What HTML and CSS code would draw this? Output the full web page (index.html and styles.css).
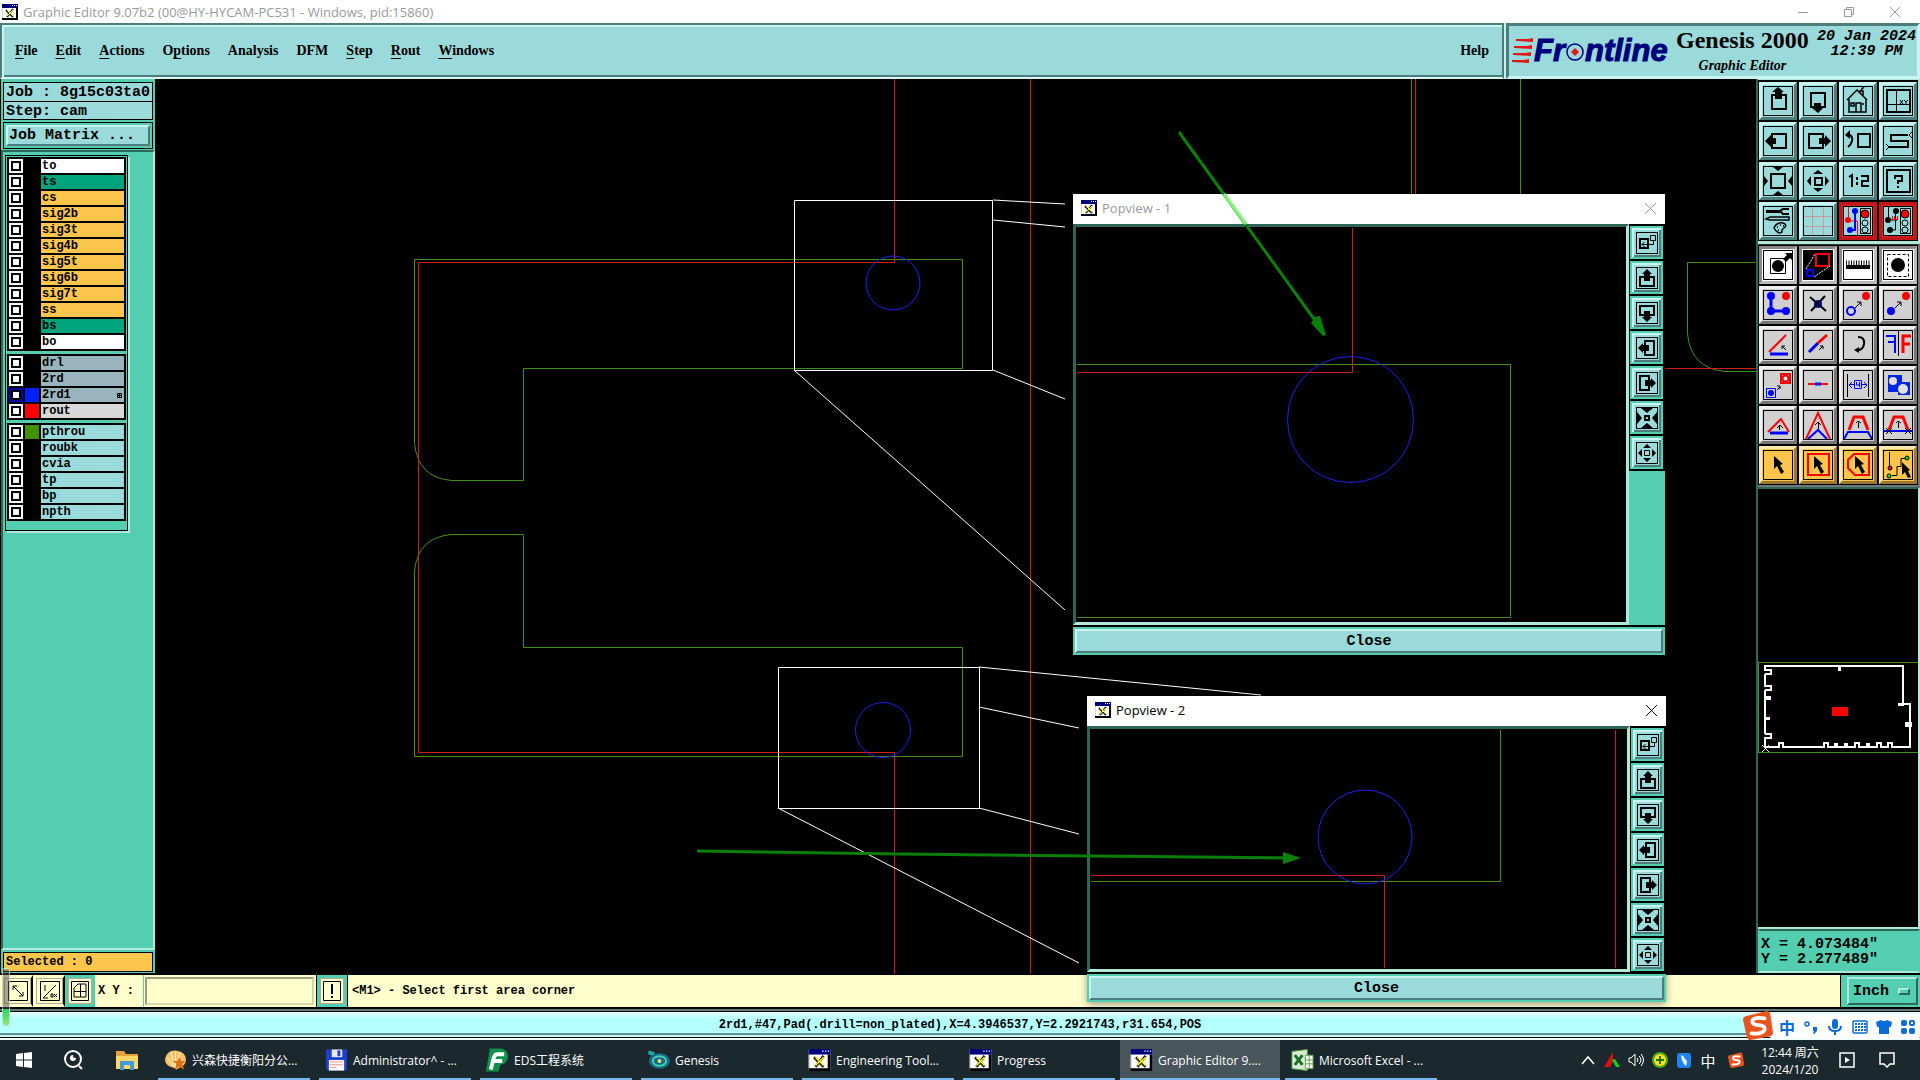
FILE: index.html
```html
<!DOCTYPE html>
<html lang="en">
<head>
    <meta charset="utf-8">
    <title>Graphic Editor 9.07b2</title>
    <link rel="stylesheet" href="styles.css">
</head>
<body>
    <!-- icon set -->
    <svg class="defs" width="0" height="0" aria-hidden="true">
        <symbol id="xwin" viewBox="0 0 16 16"><path fill="#d8d8d8" d="M0 0h16v16H0z"/><path fill="#fff" d="M1 4h13v10H1z"/><path fill="#00007c" d="M0 0h16v4H0z"/><path fill="#fff" d="M10 1h1v1h-1zM12 1h1v1h-1zM14 1h1v1h-1z"/><path d="M14 4h2v12H0v-2h14z"/><path stroke="#222" stroke-width="2" d="M4 6l7 7M11 5l-6 8"/><path stroke="#ff0" stroke-width="1" d="M5 6l6 6M11 6l-6 6"/></symbol>
        <symbol id="up" viewBox="1 1 28 28"><path fill="none" stroke="#000" stroke-width="2" d="M9 9h14v14H9z"/><path d="M15 1l6 5h-2v7h-7V6h-3z"/></symbol>
        <symbol id="down" viewBox="1 1 28 28"><path fill="none" stroke="#000" stroke-width="2" d="M8 7h14v14H8z"/><path d="M15 27l5-5h-2v-5h-7v5H9z"/></symbol>
        <symbol id="left" viewBox="1 1 28 28"><path fill="none" stroke="#000" stroke-width="2" d="M9 8h14v14H9z"/><path d="M2 15l6-6v3h5v6H8v3z"/></symbol>
        <symbol id="right" viewBox="1 1 28 28"><path fill="none" stroke="#000" stroke-width="2" d="M6 8h14v14H6z"/><path d="M28 15l-6-6v3h-6v6h6v3z"/></symbol>
        <symbol id="home" viewBox="1 1 28 28"><path fill="none" stroke="#000" stroke-width="1.500" d="M4 14l10-10 10 10M6 13v13h17V13M13 26v-9h5v9M8 17h3v3H8zM19 18h2M17 7V5h3v5M18 4l3-3"/></symbol>
        <symbol id="grid4" viewBox="1 1 28 28"><path fill="none" stroke="#000" stroke-width="2" d="M4 4h23v22H4z"/><path fill="none" stroke="#000" d="M13.500 4v22M4 18.500h23M17 14l3 4M20 14l-3 4M21 14l2 2 2-2M23 16v3"/></symbol>
        <symbol id="undo" viewBox="1 1 28 28"><path fill="none" stroke="#000" stroke-width="2" d="M15 8h12v13H15zM5 9h2q3 2 2 6-1 4-4 6"/><path d="M2 9l5-5v9z"/></symbol>
        <symbol id="snake" viewBox="1 1 28 28"><path fill="none" stroke="#000" stroke-width="2" d="M25 9H8v6h17v6H6"/><path fill="none" stroke="#000" d="M29 6l-3 3 3 3M3 18l3 3-3 3"/></symbol>
        <symbol id="zin" viewBox="1 1 28 28"><path fill="none" stroke="#000" stroke-width="2" d="M8 8h14v14H8z"/><path d="M10 1h10l-5 4zM10 29h10l-5-4zM1 10v10l4-5zM29 10v10l-4-5z"/></symbol>
        <symbol id="zout" viewBox="1 1 28 28"><path fill="none" stroke="#000" stroke-width="2" d="M12 12h7v7h-7z"/><path d="M10 8h10l-5-4zM10 22h10l-5 4zM8 10v10l-4-5zM22 10v10l4-5z"/></symbol>
        <symbol id="ratio" viewBox="1 1 28 28"><path fill="none" stroke="#000" stroke-width="2" d="M6 11l3-2v12M14 11v3M14 16v3M18 10h7v5h-6v5h7"/></symbol>
        <symbol id="query" viewBox="1 1 28 28"><path fill="none" stroke="#000" stroke-width="2" d="M4 4h23v22H4zM12 13v-3h7v5h-4v3M15 20v2"/></symbol>
        <symbol id="tools" viewBox="1 1 28 28"><path d="M3 4h14v3H3z"/><path fill="none" stroke="#000" stroke-width="2" d="M26 3h-6l-3 2 3 3h6"/><path fill="none" stroke="#000" stroke-width="1.500" d="M3 13l4-2h19v3H7zM11 22q2-6 9-5 5 2 1 5-3 2-2 4-4 3-8-4M14 21h1M17 19h1M20 20h1M15 24h1"/></symbol>
        <symbol id="mesh" viewBox="1 1 28 28"><path fill="none" stroke="#c99a9a" d="M9.500 0v30M20.500 0v30M0 10.500h30M0 20.500h30"/></symbol>
        <symbol id="light1" viewBox="1 1 28 28"><path fill="none" stroke="#000" d="M17.500 2.500h10v25h-10z"/><path fill="none" stroke="red" d="M5.500 1v14h9v14"/><circle cx="5" cy="14" r="3" fill="red"/><path fill="none" stroke="#00f" stroke-width="2" d="M12 5v19H8"/><circle cx="12" cy="5" r="3" fill="#00f"/><circle cx="7" cy="24" r="3" fill="#00f"/><circle cx="22" cy="8" r="4" fill="red" stroke="#000"/><circle cx="22" cy="17" r="3" fill="none" stroke="#000"/><circle cx="22" cy="24" r="3" fill="none" stroke="#000"/></symbol>
        <symbol id="light2" viewBox="1 1 28 28"><path fill="none" stroke="#000" d="M17.500 2.500h10v25h-10zM5.500 1v13h9M12.500 5v19H8"/><path fill="none" stroke="red" d="M8 13.500h7M9.500 10v3M11.500 10v3M14.500 10v3"/><circle cx="5" cy="14" r="3"/><circle cx="13" cy="5" r="3"/><circle cx="7" cy="24" r="3"/><circle cx="22" cy="8" r="4" fill="red" stroke="#000"/><circle cx="22" cy="17" r="3" fill="none" stroke="#000"/><circle cx="22" cy="24" r="3" fill="none" stroke="#000"/></symbol>
        <symbol id="movepad" viewBox="1 1 28 28"><path fill="none" stroke="#000" d="M7.500 8.500h15v15h-15z"/><circle cx="15" cy="16" r="6"/><path d="M20 9l4-4-2-2h7v7l-2-2-4 4z"/></symbol>
        <symbol id="popzoom" viewBox="1 1 28 28"><path d="M1 1h28v28H1z"/><path fill="none" stroke="red" stroke-width="2" d="M13 4h13v12H13z"/><path fill="none" stroke="#00f" stroke-width="2" d="M4 20h6v6H4z"/><path stroke="#fff" stroke-dasharray="2 1" d="M3 19L12 4M11 27l16-11"/></symbol>
        <symbol id="ruler" viewBox="1 1 28 28"><path d="M3 15h24v4H3z"/><path stroke="#000" stroke-dasharray="1 1.500" stroke-width="5" d="M3 13h25"/></symbol>
        <symbol id="dashpad" viewBox="1 1 28 28"><path fill="none" stroke="#000" stroke-dasharray="3 2" d="M4.500 4.500h21v22h-21z"/><circle cx="15" cy="15" r="7"/></symbol>
        <symbol id="chain" viewBox="0 0 28 28"><path fill="none" stroke="#00f" stroke-width="3" d="M7 5v15h14"/><circle cx="7" cy="5" r="4" fill="#00f"/><circle cx="7" cy="20" r="4" fill="#00f"/><circle cx="22" cy="20" r="4" fill="#00f"/><circle cx="22" cy="5" r="4" fill="red"/></symbol>
        <symbol id="delpad" viewBox="0 0 28 28"><circle cx="14" cy="13" r="4" fill="#00c"/><path stroke="#000" stroke-width="2" d="M6 6l16 14M21 5L7 20"/></symbol>
        <symbol id="copypad" viewBox="0 0 28 28"><circle cx="22" cy="5" r="4" fill="red"/><circle cx="7" cy="20" r="4" fill="none" stroke="#00f" stroke-width="2"/><path fill="none" stroke="#000" d="M11 17l6-6M13 11h4v4"/></symbol>
        <symbol id="movepad2" viewBox="0 0 28 28"><circle cx="22" cy="5" r="4" fill="red"/><circle cx="7" cy="20" r="4" fill="#00f"/><path fill="none" stroke="#000" d="M11 17l6-6M13 11h4v4"/></symbol>
        <symbol id="angle" viewBox="0 0 28 28"><path stroke="red" stroke-width="2" d="M5 21L22 4"/><path stroke="#00f" stroke-width="3" d="M6 23h18"/><path fill="none" stroke="#000" d="M22 19l-4-4M18 18v-3h3"/></symbol>
        <symbol id="diag" viewBox="0 0 28 28"><path stroke="#00f" stroke-width="3" d="M5 21l9-9"/><path stroke="red" stroke-width="3" d="M14 12l9-8"/><path fill="none" stroke="#000" d="M15 19l4-4M16 15h3v3"/></symbol>
        <symbol id="rotate" viewBox="0 0 28 28"><path fill="none" stroke="#000" stroke-width="2" d="M14 6q7 0 6 7-1 6-6 6"/><path d="M10 19l5-3v6z"/></symbol>
        <symbol id="mirror" viewBox="0 0 28 28"><path stroke="#000" d="M14.500 0v25"/><path fill="none" stroke="#00f" stroke-width="2" d="M2 5h9v17M4 11h6"/><path fill="none" stroke="red" stroke-width="3" d="M27 5h-8v17M19 13h7"/></symbol>
        <symbol id="swap" viewBox="0 0 28 28"><path fill="#fff" stroke="red" stroke-width="2" d="M17 3h9v9h-9z"/><circle cx="21.500" cy="7.500" r="3" fill="#fff" stroke="red" stroke-width="2"/><path fill="none" stroke="#00f" d="M2.500 17.500h9v9h-9z"/><circle cx="7" cy="22" r="3" fill="#00f"/><path fill="none" stroke="#000" d="M13 19l3-3M13 15h3v3"/></symbol>
        <symbol id="breakline" viewBox="0 0 28 28"><path stroke="red" stroke-width="2" d="M4 13h20"/><path stroke="#00f" stroke-width="3" d="M11 13h6"/></symbol>
        <symbol id="width" viewBox="0 0 28 28"><path stroke="#000" d="M3.500 3v23M24.500 3v23"/><path fill="none" stroke="#00f" d="M5 13.500h5M23 13.500h-5M8 11l-3 3 3 3M20 11l3 3-3 3M10.500 9.500h7v8h-7zM12.500 11v3h3M15.500 11v5"/></symbol>
        <symbol id="merge" viewBox="0 0 28 28"><path fill="#0026e8" d="M4 4h14v7h8v13H14v-3H4z"/><circle cx="9" cy="10" r="4" fill="#e0e0e0"/><circle cx="19" cy="18" r="5" fill="#e0e0e0"/></symbol>
        <symbol id="tri1" viewBox="0 0 28 28"><path fill="none" stroke="red" stroke-width="2" d="M4 21L17 8l8 13"/><path stroke="#00f" stroke-width="3" d="M6 22h18"/><path fill="none" stroke="#000" d="M15.500 19v-5M13 17l3-3 3 3"/></symbol>
        <symbol id="tri2" viewBox="0 0 28 28"><path fill="none" stroke="red" stroke-width="2" d="M2 28L14 2l12 26"/><path fill="none" stroke="#00f" stroke-width="2" d="M4 28l10-9 9 9"/><path fill="none" stroke="#000" d="M14.500 18v-6M11 14l3-3 3 3"/></symbol>
        <symbol id="trap1" viewBox="0 0 28 28"><path fill="none" stroke="#00f" stroke-width="2" d="M0 28l4-7h20l4 7"/><path fill="none" stroke="red" stroke-width="3" d="M5 19l5-13h9l5 13"/><path fill="none" stroke="#000" d="M14.500 17v-7M12 12l2-2 3 2"/></symbol>
        <symbol id="trap2" viewBox="0 0 28 28"><path fill="none" stroke="red" stroke-width="3" d="M5 19l5-13h9l5 13"/><path stroke="#00f" stroke-width="2" d="M0 20h28"/><path fill="none" stroke="#000" d="M14.500 17v-7M12 12l2-2 3 2M2 17l6 6M8 17l-6 6M21 17l6 6M27 17l-6 6"/></symbol>
        <symbol id="ptr" viewBox="0 0 28 28"><path d="M10 5l9 8-3 1 4 7-3 2-4-8-3 3z"/></symbol>
        <symbol id="ptrbox" viewBox="0 0 28 28"><path fill="none" stroke="red" stroke-width="2" d="M4 3h21v21H4z"/><path d="M10 5l9 8-3 1 4 7-3 2-4-8-3 3z"/></symbol>
        <symbol id="ptrpoly" viewBox="0 0 28 28"><path fill="none" stroke="red" stroke-width="2" d="M10 3h15v21H11l-7-7V9z"/><path d="M11 5l9 8-3 1 4 7-3 2-4-8-3 3z"/></symbol>
        <symbol id="ptrnet" viewBox="0 0 28 28"><path fill="none" stroke="#000" d="M5.500 1v16M8 24.500h5v-9h4v-8h5"/><circle cx="6" cy="17" r="2" fill="red" stroke="#000"/><circle cx="5" cy="25" r="2" fill="#0e0" stroke="#000"/><circle cx="23" cy="7" r="2" fill="#0e0" stroke="#000"/><path d="M18 11l8 8-2 1 3 6-3 1-3-6-3 3z"/></symbol>
        <!-- small versions for the popview windows -->
        <symbol id="popout" viewBox="0 0 20 20"><path fill="none" stroke="#000" stroke-width="2" d="M3 6h8v9H3z"/><path fill="none" stroke="#000" d="M13.500 2.500h5v5h-5zM16.500 8v3.500H5M7.500 9L5 11.500 7.500 14"/></symbol>
        <symbol id="pup" viewBox="0 0 20 20"><path fill="none" stroke="#000" stroke-width="2" d="M3 9h14v9H3z"/><path d="M10 1l5 5h-2v7H7V6H5z"/></symbol>
        <symbol id="pdown" viewBox="0 0 20 20"><path fill="none" stroke="#000" stroke-width="2" d="M3 3h14v9H3z"/><path d="M10 19l5-5h-2V8H7v6H5z"/></symbol>
        <symbol id="pleft" viewBox="0 0 20 20"><path fill="none" stroke="#000" stroke-width="2" d="M8 3h9v14H8z"/><path d="M1 10l5-5v2h6v6H6v2z"/></symbol>
        <symbol id="pright" viewBox="0 0 20 20"><path fill="none" stroke="#000" stroke-width="2" d="M3 3h9v14H3z"/><path d="M19 10l-5-5v2H8v6h6v2z"/></symbol>
        <symbol id="pzin" viewBox="0 0 20 20"><path fill="none" stroke="#000" stroke-width="2" d="M8 8h4v4H8z"/><path d="M4 0h12l-6 5zM4 20h12l-6-5zM0 4v12l5-6zM20 4v12l-5-6z"/></symbol>
        <symbol id="pzout" viewBox="0 0 20 20"><path fill="none" stroke="#000" d="M7.500 7.500h5v5h-5z"/><path d="M6 5h8l-4-4zM6 15h8l-4 4zM5 6v8l-4-4zM15 6v8l4-4z"/></symbol>
        <symbol id="sogou" viewBox="0 0 32 32"><path fill="#e8541e" d="M2 7L25 1q3 0 4 3l3 20q0 3-3 4L8 32q-3 0-4-3L0 10q0-2 2-3z"/><path fill="none" stroke="#fff" stroke-width="4" stroke-linecap="round" d="M23 9Q9 7 10 13q1 3 6 3 8 0 7 5-2 5-14 4"/></symbol>
    </svg>

    <header class="titlebar">
        <svg class="ico16"><use href="#xwin"/></svg>
        <span class="titlebar-text">Graphic Editor 9.07b2 (00@HY-HYCAM-PC531 - Windows, pid:15860)</span>
        <div class="winbuttons">
            <button aria-label="Minimize"><svg width="10" height="10"><path d="M0 5.500h10"/></svg></button>
            <button aria-label="Restore"><svg width="10" height="10"><path d="M.5 2.500h7v7h-7zM2.500 2V.5h7v7H8"/></svg></button>
            <button aria-label="Close window"><svg width="10" height="10"><path d="M0 0l10 10M10 0L0 10"/></svg></button>
        </div>
    </header>

    <div class="topbar">
        <nav class="menubar">
            <button><u>F</u>ile</button>
            <button><u>E</u>dit</button>
            <button><u>A</u>ctions</button>
            <button>O<u>p</u>tions</button>
            <button>Analysis</button>
            <button>DFM</button>
            <button><u>S</u>tep</button>
            <button><u>R</u>out</button>
            <button><u>W</u>indows</button>
            <button class="menu-help">Help</button>
        </nav>
        <div class="brand">
            <div class="logo">
                <svg width="22" height="26"><path fill="#e01818" d="M6 3l15-3v4zM3 10l17-3v4zM2 17l17-3v4zM0 24l17-3v4z"/><path stroke="#e01818" stroke-width="2" d="M4 2h16M2 9h18M1 16h17M0 23h17"/></svg>
                <span>Fr</span>
                <svg width="20" height="22"><circle cx="10" cy="12" r="8" fill="none" stroke="#00007c" stroke-width="1.500"/><path fill="#e01818" d="M10 8l4 4-4 4-4-4z"/></svg>
                <span>ntline</span>
            </div>
            <div class="product">
                <div class="product-name">Genesis 2000</div>
                <div class="product-sub">Graphic Editor</div>
            </div>
            <div class="date">20 Jan 2024<br>12:39 PM</div>
        </div>
    </div>

    <main class="work">
        <aside class="side">
            <div class="job">
                <div class="job-line">Job : 8g15c03ta0</div>
                <div class="job-line">Step: cam</div>
            </div>
            <div class="matrix"><button class="matrix-btn">Job Matrix ...</button></div>
            <div class="side-body">
                <div class="layers">
                    <div class="group">
                        <label class="layer"><input type="checkbox"><i></i><span class="white">to</span></label>
                        <label class="layer"><input type="checkbox"><i></i><span class="mask">ts</span></label>
                        <label class="layer"><input type="checkbox"><i></i><span class="sig">cs</span></label>
                        <label class="layer"><input type="checkbox"><i></i><span class="sig">sig2b</span></label>
                        <label class="layer"><input type="checkbox"><i></i><span class="sig">sig3t</span></label>
                        <label class="layer"><input type="checkbox"><i></i><span class="sig">sig4b</span></label>
                        <label class="layer"><input type="checkbox"><i></i><span class="sig">sig5t</span></label>
                        <label class="layer"><input type="checkbox"><i></i><span class="sig">sig6b</span></label>
                        <label class="layer"><input type="checkbox"><i></i><span class="sig">sig7t</span></label>
                        <label class="layer"><input type="checkbox"><i></i><span class="sig">ss</span></label>
                        <label class="layer"><input type="checkbox"><i></i><span class="mask">bs</span></label>
                        <label class="layer"><input type="checkbox"><i></i><span class="white">bo</span></label>
                    </div>
                    <div class="group">
                        <label class="layer"><input type="checkbox"><i></i><span class="drill">drl</span></label>
                        <label class="layer"><input type="checkbox"><i></i><span class="drill">2rd</span></label>
                        <label class="layer work-layer"><input type="checkbox"><i class="blue"></i><span class="drill">2rd1<svg width="5" height="5"><path fill="none" stroke="#000" d="M.5 .5h4v4h-4zM2.500 0v5M0 2.500h5"/></svg></span></label>
                        <label class="layer"><input type="checkbox"><i class="red"></i><span class="routing">rout</span></label>
                    </div>
                    <div class="group">
                        <label class="layer"><input type="checkbox"><i class="green"></i><span>pthrou</span></label>
                        <label class="layer"><input type="checkbox"><i></i><span>roubk</span></label>
                        <label class="layer"><input type="checkbox"><i></i><span>cvia</span></label>
                        <label class="layer"><input type="checkbox"><i></i><span>tp</span></label>
                        <label class="layer"><input type="checkbox"><i></i><span>bp</span></label>
                        <label class="layer"><input type="checkbox"><i></i><span>npth</span></label>
                    </div>
                </div>
            </div>
            <div class="selected">Selected : 0</div>
        </aside>

        <svg class="canvas">
            <g transform="translate(-155 -79)" fill="none">
                <g class="c-green">
                    <path d="M962.500 259.500H414.500V443.500Q418 478 452 480.500H523.500V368.500H962.500z"/>
                    <path d="M523.500 534.500H452Q418 537 414.500 571V756.500H962.500V647.500H523.500z"/>
                    <path d="M1411.500 79V200M1520.500 79V200M1760 262.500H1687.500V333Q1690 368 1725 371.500H1760"/>
                </g>
                <g class="c-red">
                    <path d="M894.500 79V262.500H418.500V752.500H894.500V974M1030.500 79V974M1415.500 79V200M1660 368.500H1760"/>
                </g>
                <g class="c-blue"><circle cx="893" cy="283" r="27"/><circle cx="883" cy="730" r="27.500"/></g>
                <g class="c-white">
                    <path d="M794.500 200.500H992.500V370.500H794.500zM778.500 667.500H979.500V808.500H778.500z"/>
                    <path d="M993 200L1065 204M993 220L1065 227M993 370L1065 399M794 370L1065 610M979 667L1261 695M979 707L1079 728M979 808L1079 834M778 808L1079 963"/>
                </g>
            </g>
        </svg>

        <aside class="tools">
            <div class="toolgrid">
                <button aria-label="Pan up"><svg><use href="#up"/></svg></button>
                <button aria-label="Pan down"><svg><use href="#down"/></svg></button>
                <button aria-label="Home"><svg><use href="#home"/></svg></button>
                <button aria-label="XY window"><svg><use href="#grid4"/></svg></button>
                <button aria-label="Pan left"><svg><use href="#left"/></svg></button>
                <button aria-label="Pan right"><svg><use href="#right"/></svg></button>
                <button aria-label="Previous view"><svg><use href="#undo"/></svg></button>
                <button aria-label="Serpentine"><svg><use href="#snake"/></svg></button>
                <button aria-label="Zoom in"><svg><use href="#zin"/></svg></button>
                <button aria-label="Zoom out"><svg><use href="#zout"/></svg></button>
                <button aria-label="Scale"><svg><use href="#ratio"/></svg></button>
                <button aria-label="Query"><svg><use href="#query"/></svg></button>
                <button aria-label="Options"><svg><use href="#tools"/></svg></button>
                <button aria-label="Grid"><svg><use href="#mesh"/></svg></button>
                <button class="stop" aria-label="Net check"><svg><use href="#light1"/></svg></button>
                <button class="stop" aria-label="Short check"><svg><use href="#light2"/></svg></button>
            </div>
            <div class="toolgrid edit">
                <button class="on" aria-label="Move"><svg><use href="#movepad"/></svg></button>
                <button class="on" aria-label="Popview"><svg><use href="#popzoom"/></svg></button>
                <button class="on" aria-label="Measure"><svg><use href="#ruler"/></svg></button>
                <button class="on" aria-label="Select pad"><svg><use href="#dashpad"/></svg></button>
                <button aria-label="Add chain"><svg><use href="#chain"/></svg></button>
                <button aria-label="Delete"><svg><use href="#delpad"/></svg></button>
                <button aria-label="Copy"><svg><use href="#copypad"/></svg></button>
                <button aria-label="Move pad"><svg><use href="#movepad2"/></svg></button>
                <button aria-label="Angle"><svg><use href="#angle"/></svg></button>
                <button aria-label="Stretch"><svg><use href="#diag"/></svg></button>
                <button aria-label="Rotate"><svg><use href="#rotate"/></svg></button>
                <button aria-label="Mirror"><svg><use href="#mirror"/></svg></button>
                <button aria-label="Substitute"><svg><use href="#swap"/></svg></button>
                <button aria-label="Break"><svg><use href="#breakline"/></svg></button>
                <button aria-label="Width"><svg><use href="#width"/></svg></button>
                <button aria-label="Merge"><svg><use href="#merge"/></svg></button>
                <button aria-label="Move segment"><svg><use href="#tri1"/></svg></button>
                <button aria-label="Move corner"><svg><use href="#tri2"/></svg></button>
                <button aria-label="Move triplet"><svg><use href="#trap1"/></svg></button>
                <button aria-label="Trim triplet"><svg><use href="#trap2"/></svg></button>
                <button class="sel" aria-label="Select"><svg><use href="#ptr"/></svg></button>
                <button class="sel" aria-label="Select in box"><svg><use href="#ptrbox"/></svg></button>
                <button class="sel" aria-label="Select in polygon"><svg><use href="#ptrpoly"/></svg></button>
                <button class="sel" aria-label="Select net"><svg><use href="#ptrnet"/></svg></button>
            </div>
            <div class="overview">
                <svg viewBox="0 0 160 92" fill="none">
                    <path stroke="#459014" d="M0 .5h160M0 90.500h160M.5 0v90"/>
                    <path stroke="#fff" stroke-width="2" d="M7 4h138v38h7v43H7z"/>
                    <path stroke="#000" stroke-width="3" d="M7 9v3M7 25v3M7 72v3M21 85h4M66 85h4M97 85h4M119 85h4M130 85h4"/>
                    <path stroke="#fff" stroke-width="2" d="M7 8h6v4H7M7 24h6v4H7M7 72h6v4H7M21 86v-5h4v5M66 86v-5h4v5M97 86v-5h4v5M119 86v-5h4v5M130 86v-5h4v5"/>
                    <path fill="#fff" d="M80 4h3v5h-3zM6 34h7v4H6zM7 55h5v3H7zM76 81h4v5h-4zM86 81h4v5h-4zM108 81h4v5h-4zM147 60h7v5h-7zM140 41h6v3h-6z"/>
                    <path fill="red" d="M74 45h16v9H74z"/>
                    <path stroke="#fff" d="M4 83l7 7M11 83l-7 7"/>
                </svg>
            </div>
            <div class="coords">X = 4.073484"<br>Y = 2.277489"</div>
        </aside>
    </main>

    <footer class="cmdline">
        <button class="cmd-btn flat" aria-label="Snap line"><svg width="20" height="20"><path d="M.5 .5h19v19H.5zM5 5l10 10M5 9V5h4M15 11v4h-4"/></svg></button>
        <button class="cmd-btn flat" aria-label="Absolute or relative"><svg width="20" height="20"><path d="M.5 .5h19v19H.5zM3 17L16 4M5 4v6M3 17h5M11 13h2v3h-2zM14 13l3 3M17 13l-3 3"/></svg></button>
        <button class="cmd-btn" aria-label="Snap grid"><svg width="18" height="20"><path d="M.5 .5h17v19H.5zM7 3h8v13H3V7zM9.500 3v13M3 10.500h12"/></svg></button>
        <label class="xy-label" for="xy">X Y :</label>
        <div class="xy-box"><input id="xy" type="text"></div>
        <button class="cmd-btn" aria-label="Message"><svg width="18" height="20"><path d="M.5 .5h17v19H.5z"/><path stroke-width="2" d="M9 3v10M9 15v2"/></svg></button>
        <div class="message">&lt;M1&gt; - Select first area corner</div>
        <div class="unit">
            <div class="unit-box">
                <select aria-label="Unit"><option>Inch</option><option>MM</option></select>
                <i></i>
            </div>
        </div>
    </footer>
    <div class="status">2rd1,#47,Pad(.drill=non_plated),X=4.3946537,Y=2.2921743,r31.654,POS</div>

    <div class="taskbar">
        <button class="sys" aria-label="Start"><svg width="16" height="16"><path fill="#fff" d="M0 2l7-1v6.500H0zM8 1l8-1v7.500H8zM0 8.500h7V15l-7-1zM8 8.500h8V16l-8-1z"/></svg></button>
        <button class="sys search" aria-label="Search"><svg width="22" height="22"><circle cx="10" cy="10" r="8" fill="none" stroke="#fff" stroke-width="2"/><circle cx="10" cy="9" r="3" fill="#fff"/><circle cx="12" cy="7" r="2" fill="#1b282d"/><path stroke="#fff" stroke-width="2" d="M16 17l3 3"/></svg></button>
        <button class="sys folder" aria-label="Files"><svg width="22" height="20"><path fill="#e8a33d" d="M0 1h8l2 3h12v15H0z"/><path fill="#ffd767" d="M0 6h22v13H0z"/><path fill="#3f9bd8" d="M4 11h14v9h-4v-5H8v5H4z"/></svg></button>
        <div class="tasks">
            <button class="task"><svg width="24" height="24" viewBox="0 0 24 24"><path fill="#f6c36b" d="M12 2q11 1 11 10-1 7-7 8l-3 2-3-2Q2 19 1 12 2 2 12 2z"/><path stroke="#fff0c0" fill="none" d="M12 3v17M7 4l4 15M17 4l-4 15M3 9l7 10"/><path fill="#e07018" d="M16 9l2 4h5l-4 3 2 6-5-3-5 3 2-6-4-3h5z"/></svg><span>兴森快捷衡阳分公...</span></button>
            <button class="task"><svg width="24" height="24" viewBox="0 0 24 24"><path fill="#1c3fd0" d="M1 1h22v22H3l-2-2z"/><path fill="#e8e8f0" d="M7 1h11v8H7z"/><path fill="#1c3fd0" d="M13 2h3v6h-3z"/><path fill="#fff" d="M4 12h16v11H4z"/><path stroke="#e88" d="M5 14h14M5 17h14M5 20h7"/></svg><span>Administrator^ - ...</span></button>
            <button class="task"><svg width="24" height="24" viewBox="0 0 24 24"><path fill="#109048" d="M4 0h12q7 1 7 9-1 7-8 8l-2 7H0z"/><path fill="none" stroke="#fff" stroke-width="4" d="M19 6h-7q-3 0-4 4L5 22M8 13h9"/></svg><span>EDS工程系统</span></button>
            <button class="task"><svg width="24" height="24" viewBox="0 0 24 24"><path fill="#20a8a8" d="M2 2l6 2-1 4-6-2z"/><ellipse cx="13" cy="13" rx="11" ry="8" fill="#176a84"/><ellipse cx="13" cy="13" rx="7" ry="5" fill="none" stroke="#3fd0b0" stroke-width="2"/><circle cx="13" cy="13" r="2" fill="#e8e060"/></svg><span>Genesis</span></button>
            <button class="task"><svg width="22" height="22"><use href="#xwin"/></svg><span>Engineering Tool...</span></button>
            <button class="task"><svg width="22" height="22"><use href="#xwin"/></svg><span>Progress</span></button>
            <button class="task active"><svg width="22" height="22"><use href="#xwin"/></svg><span>Graphic Editor 9....</span></button>
            <button class="task"><svg width="24" height="24" viewBox="0 0 24 24"><path fill="#d8ecd0" stroke="#5c9c4c" d="M1 3l16-2v22L1 21z"/><path fill="#fff" stroke="#5c9c4c" d="M15 7h8v14h-8zM15 12h8M15 16h8M19 7v14"/><path stroke="#1c6c2c" stroke-width="3" d="M4 7l8 10M12 7L4 17"/></svg><span>Microsoft Excel - ...</span></button>
        </div>
        <div class="tray">
            <button aria-label="Show hidden icons"><svg width="14" height="10"><path fill="none" stroke="#fff" stroke-width="1.500" d="M1 9l6-7 6 7"/></svg></button>
            <button aria-label="Monitor"><svg width="16" height="16"><path fill="#e01010" d="M0 15L9 0v9l-3 6z"/><path fill="#10d020" d="M8 8l3-1 5 8h-4z"/></svg></button>
            <button aria-label="Volume"><svg width="16" height="14"><path fill="none" stroke="#fff" d="M1 5h2l4-4v12L3 9H1zM9 5q2 2 0 4M11 3q4 4 0 8M13 1q5 6 0 12"/></svg></button>
            <button aria-label="Guard"><svg width="16" height="16"><circle cx="8" cy="8" r="8" fill="#4ca81c"/><circle cx="8" cy="8" r="6" fill="#f8e020"/><path stroke="#187818" stroke-width="2" d="M8 4v8M4 8h8"/></svg></button>
            <button aria-label="Bird"><svg width="14" height="15"><rect width="14" height="15" rx="3" fill="#1c84f0"/><path fill="#fff" d="M4 2q3 1 4 4 2 1 2 3l-1 4q-4-3-5-11z"/></svg></button>
            <button class="ime" aria-label="Input mode">中</button>
            <button aria-label="Sogou"><svg width="16" height="16"><use href="#sogou"/></svg></button>
        </div>
        <div class="clock">12:44 周六<br>2024/1/20</div>
        <button class="sys" aria-label="Player"><svg width="16" height="16"><path fill="none" stroke="#fff" stroke-width="1.500" d="M1 1h14v14H1z"/><path fill="#fff" d="M6 5l5 3-5 3z"/></svg></button>
        <button class="sys notice" aria-label="Notifications"><svg width="16" height="17"><path fill="none" stroke="#fff" stroke-width="1.500" d="M1 1h14v11h-4l-3 3-3-3H1z"/></svg></button>
    </div>

    <section class="popview pop1">
        <div class="pop-title"><svg class="ico16"><use href="#xwin"/></svg><span>Popview - 1</span><button aria-label="Close Popview 1"><svg width="11" height="11"><path d="M0 0l11 11M11 0L0 11"/></svg></button></div>
        <div class="pop-body">
            <svg class="pop-canvas">
                <g transform="translate(-1076 -227)" fill="none">
                    <path class="c-green" d="M1077 364.500H1510.500V617.500H1077"/>
                    <path class="c-red" d="M1352.500 228V372.500H1077"/>
                    <circle class="c-blue" cx="1350.500" cy="419.500" r="63"/>
                </g>
            </svg>
            <div class="pop-tools">
                <button aria-label="Pop out"><svg><use href="#popout"/></svg></button>
                <button aria-label="Up"><svg><use href="#pup"/></svg></button>
                <button aria-label="Down"><svg><use href="#pdown"/></svg></button>
                <button aria-label="Left"><svg><use href="#pleft"/></svg></button>
                <button aria-label="Right"><svg><use href="#pright"/></svg></button>
                <button aria-label="Zoom in"><svg><use href="#pzin"/></svg></button>
                <button aria-label="Zoom out"><svg><use href="#pzout"/></svg></button>
            </div>
        </div>
        <div class="pop-foot"><button>Close</button></div>
    </section>

    <section class="popview pop2">
        <div class="pop-title"><svg class="ico16"><use href="#xwin"/></svg><span>Popview - 2</span><button aria-label="Close Popview 2"><svg width="11" height="11"><path d="M0 0l11 11M11 0L0 11"/></svg></button></div>
        <div class="pop-body">
            <svg class="pop-canvas">
                <g transform="translate(-1090 -729)" fill="none">
                    <path class="c-green" d="M1500.500 730V881.500H1091"/>
                    <path class="c-red" d="M1091 875.500H1384.500V968M1615.500 730V968"/>
                    <circle class="c-blue" cx="1365" cy="837" r="47"/>
                </g>
            </svg>
            <div class="pop-tools">
                <button aria-label="Pop out"><svg><use href="#popout"/></svg></button>
                <button aria-label="Up"><svg><use href="#pup"/></svg></button>
                <button aria-label="Down"><svg><use href="#pdown"/></svg></button>
                <button aria-label="Left"><svg><use href="#pleft"/></svg></button>
                <button aria-label="Right"><svg><use href="#pright"/></svg></button>
                <button aria-label="Zoom in"><svg><use href="#pzin"/></svg></button>
                <button aria-label="Zoom out"><svg><use href="#pzout"/></svg></button>
            </div>
        </div>
        <div class="pop-foot"><button>Close</button></div>
    </section>

    <!-- marker arrows drawn over the windows -->
    <svg class="marks">
        <g stroke="#0a800a" stroke-width="3" fill="none">
            <path d="M1179 132L1314 319M697 851L900 854L1286 858"/>
            <path stroke="#80f880" d="M1224 194L1246 224"/>
        </g>
        <path fill="#0a800a" d="M1311 323l4-6 5-1 6 19-3 1zM1283 852l18 6-18 6z"/>
    </svg>

    <div class="level"></div>

    <div class="imebar">
        <svg class="ime-logo" width="32" height="30"><use href="#sogou"/></svg>
        <span class="ime-mode">中</span>
        <svg width="16" height="16"><circle cx="4" cy="5" r="2" fill="none" stroke="#0a6cd6" stroke-width="1.500"/><path fill="#0a6cd6" d="M10 8h4v4l-3 3h-1l1-3h-1z"/></svg>
        <svg width="16" height="16"><rect x="5" y="0" width="6" height="10" rx="3" fill="#0a6cd6"/><path fill="none" stroke="#0a6cd6" stroke-width="2" d="M2 7q0 5 6 5t6-5M8 12v4"/></svg>
        <svg width="16" height="16"><rect x="1" y="2" width="14" height="12" rx="1" fill="none" stroke="#0a6cd6" stroke-width="1.500"/><path stroke="#0a6cd6" stroke-width="2" stroke-dasharray="2 1" d="M3 5h11M3 8h11M3 11h11"/></svg>
        <svg width="16" height="16"><path fill="#0a6cd6" d="M0 3l5-2q3 2 6 0l5 2-1 5h-2v7H3V8H1z"/></svg>
        <svg width="16" height="16"><rect x="1" y="1" width="6" height="6" rx="2" fill="#0a6cd6"/><rect x="10" y="2" width="4" height="4" rx="1" fill="none" stroke="#0a6cd6" stroke-width="2"/><rect x="1" y="9" width="6" height="6" rx="2" fill="#0a6cd6"/><rect x="9" y="9" width="6" height="6" rx="2" fill="#0a6cd6"/></svg>
    </div>
</body>
</html>
```
FILE: styles.css
```css
* {
    box-sizing: border-box;
}

body {
    margin: 0;
    height: 100vh;
    display: flex;
    flex-direction: column;
    position: relative;
    overflow: hidden;
    background: #000;
    color: #000;
    font-family: "Liberation Mono", monospace;
    font-size: 12px;
    font-weight: bold;
}

svg {
    display: block;
    flex: none;
}

.defs {
    position: absolute;
}

button {
    margin: 0;
    padding: 0;
    border: 0;
    background: none;
    color: inherit;
    font: inherit;
}

.ico16 {
    width: 16px;
    height: 16px;
}

/* window title */
.titlebar {
    flex: none;
    height: 23px;
    padding-left: 2px;
    display: flex;
    align-items: center;
    gap: 5px;
    background: #fff;
    color: #999;
    font: 13px "Open Sans", sans-serif;
}

.winbuttons {
    margin-left: auto;
    padding-right: 2px;
    display: flex;
}

.winbuttons button {
    width: 46px;
    display: flex;
    justify-content: center;
}

.winbuttons path {
    fill: none;
    stroke: #999;
}

/* menu and brand */
.topbar {
    flex: none;
    height: 56px;
    display: flex;
    background: #c6f0ee;
}

.menubar {
    flex: 1;
    display: flex;
    align-items: center;
    gap: 18px;
    padding: 0 13px;
    border: 2px solid;
    border-color: #4c7c7c #4c7c7c #d8f8f6 #4c7c7c;
    box-shadow: inset 2px 2px #c8f5f2, inset 0 -2px #4c7c7c;
    background: #9adada;
    font: bold 14px "Liberation Serif", serif;
}

.menubar u {
    text-underline-offset: 3px;
}

.menu-help {
    margin-left: auto;
}

.brand {
    flex: none;
    width: 414px;
    margin-left: 2px;
    padding: 0 1px 0 3px;
    display: flex;
    justify-content: space-between;
    border: 3px solid;
    border-color: #4c7c7c #c8f5f2 #c8f5f2 #4c7c7c;
    background: #9adada;
}

.logo {
    display: flex;
    align-items: center;
    color: #00007c;
    font: italic bold 31px "Liberation Sans", sans-serif;
    -webkit-text-stroke: 1px #00007c;
}

.product {
    font-family: "Liberation Serif", serif;
    text-align: center;
}

.product-name {
    font-size: 24px;
    line-height: 28px;
}

.product-sub {
    font-size: 14px;
    font-style: italic;
    line-height: 24px;
}

.date {
    padding-top: 3px;
    font-size: 15px;
    font-style: italic;
    line-height: 15px;
    text-align: center;
}

/* work area */
.work {
    flex: 1;
    min-height: 0;
    display: flex;
}

.canvas {
    flex: 1;
    min-width: 0;
    height: 100%;
}

.c-green { stroke: #459014; }
.c-red { stroke: #d01c1c; }
.c-blue { stroke: #1824f0; }
.c-white { stroke: #fff; }

/* left side */
.side {
    flex: none;
    width: 155px;
    margin-bottom: 2px;
    padding: 3px 2px 1px;
    display: flex;
    flex-direction: column;
    background: #54ceb0;
    border-left: 1px solid #000;
}

.job {
    border: 1px solid #000;
    background: #9adada;
    font-size: 15px;
}

.job-line {
    height: 18px;
    padding-left: 2px;
    line-height: 19px;
    white-space: nowrap;
}

.job-line + .job-line {
    border-top: 1px solid #000;
}

.matrix {
    margin-top: 2px;
    padding: 2px;
    border: 1px solid #000;
}

.matrix-btn {
    display: block;
    width: 100%;
    height: 21px;
    padding-left: 1px;
    border: 2px solid;
    border-color: #c8f5f2 #4c7c7c #4c7c7c #c8f5f2;
    background: #9adada;
    font-size: 15px;
    line-height: 17px;
    text-align: left;
}

.side-body {
    flex: 1;
    margin: 1px -2px 2px;
    padding: 3px 2px;
    border: 2px solid;
    border-color: #2f665a #b0e8da #b0e8da #2f665a;
}

.layers {
    width: 123px;
    height: 376px;
    padding: 1px;
    display: flex;
    flex-direction: column;
    gap: 3px;
    border: 1px solid #000;
    box-shadow: 2px 2px #b0e8da;
}

.group {
    padding: 2px;
    display: flex;
    flex-direction: column;
    gap: 2px;
    background: #000;
}

.layer {
    height: 14px;
    display: flex;
    gap: 2px;
}

.layer input {
    appearance: none;
    margin: 0;
    width: 14px;
    height: 14px;
    border: 2px solid #fff;
    background: #fff;
    box-shadow: inset 0 0 0 2px #000;
}

.work-layer input {
    border-color: #0000a8;
}

.layer i {
    width: 14px;
}

.layer .blue { background: #0020ff; }
.layer .red { background: #f00; }
.layer .green { background: #459000; }

.layer span {
    flex: 1;
    display: flex;
    align-items: center;
    justify-content: space-between;
    padding: 0 2px 0 1px;
    background: #9adada;
    line-height: 14px;
}

.layer .white { background: #fff; }
.layer .mask { background: #00a47c; }
.layer .sig { background: #fcc54c; }
.layer .drill { background: #9ab4be; }
.layer .routing { background: #d8d8d8; }

.selected {
    height: 20px;
    padding-left: 2px;
    border: 1px solid #000;
    background: #fcc54c;
    line-height: 18px;
}

/* right side tools */
.tools {
    flex: none;
    width: 164px;
    margin-bottom: 2px;
    display: flex;
    flex-direction: column;
    border-left: 2px solid #2f665a;
    background: #000;
}

.toolgrid {
    padding: 2px 0 1px 1px;
    display: grid;
    grid-template-columns: repeat(4, 38px);
    gap: 2px;
    border-top: 1px solid #b0e8da;
    border-right: 2px solid #b0e8da;
    border-bottom: 3px solid #b0e8da;
}

.toolgrid.edit {
    padding-top: 1px;
    border-top: 1px solid #333;
    border-right-color: #777;
    border-bottom: 2px solid #6e7876;
}

.toolgrid button {
    height: 38px;
    padding: 1px;
    border: 3px solid;
    border-color: #c8f5f2 #4c7c7c #4c7c7c #c8f5f2;
    background: #9adada;
}

.toolgrid button svg {
    width: 30px;
    height: 30px;
    border: 1px solid #000;
}

.toolgrid .stop {
    border-color: #c01818;
    box-shadow: inset 0 0 0 1px #e02020;
}

.toolgrid.edit button {
    border-color: #f0f0f0 #777 #777 #f0f0f0;
    background: #d0d0d0;
}

.toolgrid.edit .on {
    border-color: #888 #bbb #bbb #888;
    background: #fff;
}

.toolgrid.edit .sel {
    border-color: #ffe8b0 #9c7830 #9c7830 #ffe8b0;
    background: #fcc54c;
}

.overview {
    flex: 1;
    display: flex;
    align-items: center;
    border-top: 2px solid #2f665a;
    border-right: 2px solid #b0e8da;
    border-bottom: 2px solid #b0e8da;
}

.overview svg {
    width: 100%;
}

.coords {
    height: 44px;
    padding: 6px 1px;
    border: 2px solid;
    border-color: #2f665a #54ceb0 #b0e8da #54ceb0;
    background: #54ceb0;
    font-size: 15px;
    line-height: 15px;
}

/* command line */
.cmdline {
    flex: none;
    height: 32px;
    padding-left: 1px;
    display: flex;
    background: #ffffcc;
}

.cmd-btn {
    width: 30px;
    border: 3px solid #54ceb0;
    background: #ffffcc;
    box-shadow: inset 0 0 0 1px #b8a890;
    display: flex;
    align-items: center;
    justify-content: center;
}

.cmd-btn.flat {
    width: 32px;
    border-color: #ffffcc;
    border-right: 2px solid #000;
}

.cmd-btn path {
    fill: none;
    stroke: #000;
}

.xy-label {
    width: 49px;
    padding-left: 3px;
    border-right: 1px solid #54ceb0;
    line-height: 33px;
    white-space: nowrap;
}

.xy-box {
    width: 173px;
    padding: 2px 2px 2px 1px;
    border-right: 1px solid #000;
}

.xy-box input {
    width: 100%;
    height: 28px;
    padding: 0 5px;
    border: 2px solid;
    border-color: #a09c80 #d8d4ac #d8d4ac #a09c80;
    border-radius: 0;
    background: #ffffcc;
    font: bold 12px "Liberation Mono", monospace;
}

.message {
    flex: 1;
    padding-left: 4px;
    border-left: 1px solid #000;
    line-height: 33px;
}

.unit {
    width: 80px;
    padding: 2px 2px 2px 6px;
    border-left: 1px solid #000;
    background: #54ceb0;
}

.unit-box {
    height: 28px;
    padding: 0 6px 0 4px;
    display: flex;
    align-items: center;
    justify-content: space-between;
    border: 2px solid;
    border-color: #b0e8da #2f665a #2f665a #b0e8da;
}

.unit-box select {
    appearance: none;
    width: 40px;
    padding: 0;
    border: 0;
    background: none;
    color: #000;
    font: bold 15px "Liberation Mono", monospace;
}

.unit-box i {
    width: 12px;
    height: 7px;
    border: 2px solid;
    border-color: #b0e8da #2f665a #2f665a #b0e8da;
}

.status {
    flex: none;
    height: 31px;
    margin-top: 2px;
    border-top: 2px solid #607c7c;
    border-bottom: 2px solid #e8ffff;
    background: linear-gradient(#000 1px, #e8ffff 1px, #b4ffff 8px, #b4ffff 22px, #5c9090 22px, #5c9090 24px, #c8f5f2 24px, #c8f5f2 26px, #000 26px);
    line-height: 28px;
    text-align: center;
}

/* windows taskbar */
.taskbar {
    flex: none;
    height: 40px;
    padding-right: 17px;
    display: flex;
    background: #1b282d;
    color: #fff;
    font: 12px "Open Sans", "Noto Sans CJK SC", sans-serif;
}

.sys {
    width: 47px;
    display: flex;
    align-items: center;
    justify-content: center;
}

.search {
    width: 53px;
}

.folder {
    width: 54px;
}

.sys.notice {
    width: 33px;
}

.tasks {
    flex: 1;
    display: flex;
    gap: 1px;
}

.task {
    width: 160px;
    padding: 0 4px 0 10px;
    display: flex;
    align-items: center;
    gap: 5px;
    background: linear-gradient(#76b9ed, #76b9ed) 4px 100% / 152px 2px no-repeat;
    white-space: nowrap;
}

.task svg {
    width: 23px;
}

.task.active {
    background-color: #48555a;
    background-size: 160px 2px;
    background-position: 0 100%;
}

.tray {
    display: flex;
}

.tray button {
    width: 24px;
    display: flex;
    align-items: center;
    justify-content: center;
}

.tray .ime {
    font-size: 15px;
}

.tray button:last-child {
    width: 32px;
}

.clock {
    width: 66px;
    margin-left: 5px;
    padding-top: 4px;
    line-height: 17px;
    text-align: center;
}

/* popview windows */
.popview {
    position: absolute;
    display: flex;
    flex-direction: column;
    background: #000;
    box-shadow: 0 2px 8px rgba(0, 0, 0, .4);
}

.pop1 {
    left: 1073px;
    top: 194px;
    width: 592px;
    height: 461px;
}

.pop2 {
    left: 1087px;
    top: 696px;
    width: 579px;
    height: 306px;
}

.pop-title {
    flex: none;
    height: 30px;
    padding: 0 9px 2px 8px;
    display: flex;
    align-items: center;
    gap: 5px;
    background: #fff;
    font: 13px "Open Sans", sans-serif;
}

.pop1 .pop-title {
    color: #999;
}

.pop-title button {
    margin-left: auto;
}

.pop-title button path {
    stroke: currentColor;
}

.pop-body {
    flex: 1;
    min-height: 0;
    display: flex;
}

.pop-canvas {
    flex: 1;
    min-width: 0;
    height: 100%;
    border: 3px solid;
    border-color: #2f665a #b0e8da #b0e8da #2f665a;
}

.pop-tools {
    width: 36px;
    padding: 2px 2px 0 1px;
    display: flex;
    flex-direction: column;
    gap: 2px;
    background: linear-gradient(#000 247px, #54ceb0 247px);
}

.pop-tools button {
    height: 33px;
    border: 2px solid #54ceb0;
    box-shadow: inset 2px 2px #c8f5f2, inset -2px -2px #4c7c7c;
    background: #9adada;
    display: flex;
    align-items: center;
    justify-content: center;
}

.pop-tools svg {
    width: 22px;
    height: 22px;
    border: 1px solid #000;
}

.pop-foot {
    flex: none;
    margin-top: 2px;
    padding: 2px;
    background: #54ceb0;
}

.pop-foot button {
    display: block;
    width: 100%;
    height: 24px;
    border: 2px solid;
    border-color: #c8f5f2 #4c7c7c #4c7c7c #c8f5f2;
    background: #9adada;
    font-size: 15px;
}

.marks {
    position: absolute;
    inset: 0;
    width: 100%;
    height: 100%;
    pointer-events: none;
}

.level {
    position: absolute;
    left: 2px;
    bottom: 54px;
    width: 8px;
    height: 58px;
    border: 1px solid rgba(255, 255, 255, .5);
    border-radius: 3px;
    background: linear-gradient(rgba(80, 80, 80, .5) 40px, #2cd060 40px, #8ce878);
}

.imebar {
    position: absolute;
    right: 0;
    bottom: 41px;
    width: 150px;
    height: 25px;
    padding: 0 4px 0 9px;
    display: flex;
    align-items: center;
    justify-content: space-between;
    border-radius: 3px;
    background: #fff;
    color: #0a6cd6;
}

.ime-logo {
    position: absolute;
    left: -28px;
    bottom: -1px;
}

.ime-mode {
    font: bold 16px "Noto Sans CJK SC", sans-serif;
}
```
